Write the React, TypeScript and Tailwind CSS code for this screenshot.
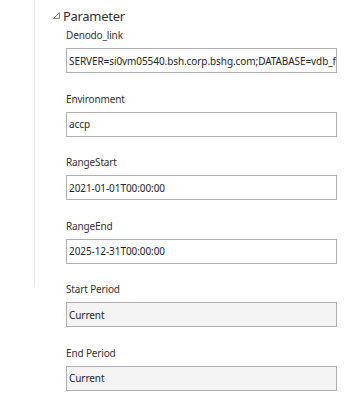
const fields = [
  { label: "Denodo_link", value: "SERVER=si0vm05540.bsh.corp.bshg.com;DATABASE=vdb_f", disabled: false },
  { label: "Environment", value: "accp", disabled: false },
  { label: "RangeStart", value: "2021-01-01T00:00:00", disabled: false },
  { label: "RangeEnd", value: "2025-12-31T00:00:00", disabled: false },
  { label: "Start Period", value: "Current", disabled: true },
  { label: "End Period", value: "Current", disabled: true },
]

function Field({ label, value, disabled }: { label: string; value: string; disabled: boolean }) {
  return (
    <div className="flex flex-col">
      <div className="h-[18px] flex items-center text-[10px] tracking-[-0.15px] text-[#323130] leading-none">{label}</div>
      <div
        className={
          disabled
            ? "mt-[4px] h-[25px] w-[271px] border border-[#b0b0b0] bg-[#f4f4f4] px-[2px] flex items-center overflow-hidden"
            : "mt-[4px] h-[25px] w-[271px] border border-[#b0b0b0] bg-white px-[2px] flex items-center overflow-hidden"
        }
      >
        <span className="whitespace-nowrap text-[10px] tracking-[-0.08px] text-[#252525] leading-none">{value}</span>
      </div>
    </div>
  )
}

export default function App() {
  return (
    <div
      className="w-[347px] h-[400px] bg-white flex overflow-hidden"
      style={{ fontFamily: '"Noto Sans", "Open Sans", sans-serif' }}
    >
      <div className="ml-[34px] w-px h-[287px] bg-[#e3e3e3]" />
      <div className="flex flex-col ml-[18px]">
        <div className="mt-[6px] h-[20px] flex items-center">
          <svg width="7" height="7" viewBox="0 0 7 7" className="mr-[3px] -mt-[2px]">
            <path d="M6.4 0.6 L6.4 6.4 L0.6 6.4 Z" fill="none" stroke="#707070" strokeWidth="0.9" />
          </svg>
          <span className="text-[13px] tracking-[-0.3px] text-[#323130] leading-none">Parameter</span>
        </div>
        <div className="ml-[13px] flex flex-col gap-[16.5px]">
          {fields.map((f) => (
            <Field key={f.label} {...f} />
          ))}
        </div>
      </div>
    </div>
  )
}
